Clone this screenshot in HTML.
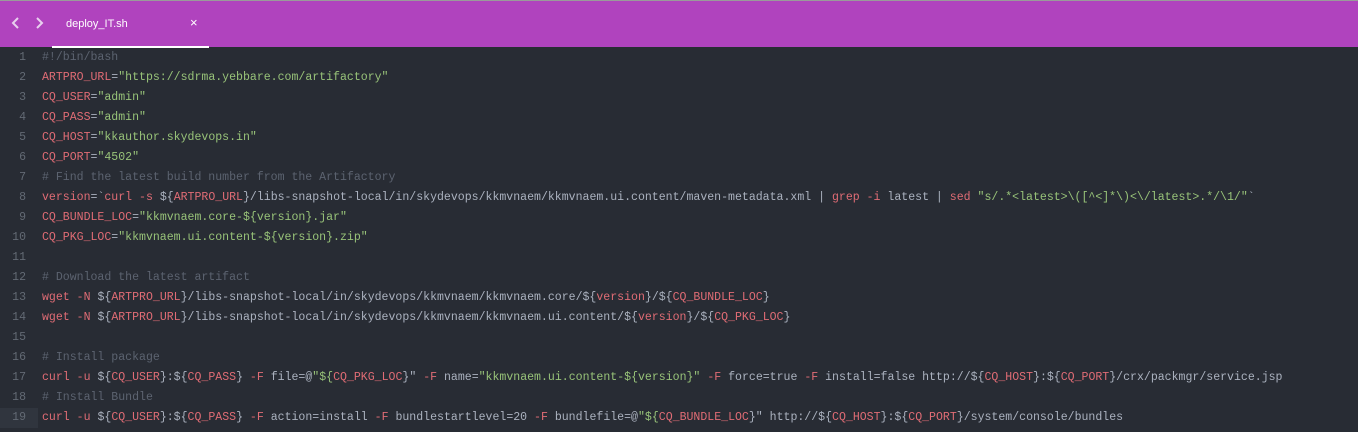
<!DOCTYPE html>
<html><head><style>
body{margin:0;width:1358px;height:432px;background:#282c34;overflow:hidden;font-family:"Liberation Sans",sans-serif}
.top{position:absolute;left:0;top:0;width:1358px;height:47px;background:#b043be;border-top:1px solid #9a9a9a;box-sizing:border-box}
.tab{position:absolute;left:66px;top:17px;color:#fff;font-size:11px}
.x{position:absolute;left:190px;top:14px;color:#fff;font-size:13px}
.ul{position:absolute;left:52px;top:45px;width:157px;height:2px;background:#fff}
.code{position:absolute;left:0;top:48px;font-family:"Liberation Mono",monospace;font-size:11.55px;color:#abb2bf}
.l{height:20px;line-height:20px;position:relative;white-space:pre}
.n{display:inline-block;width:26px;text-align:right;color:#636a74;margin-right:16px}
.r{color:#e06c75}.g{color:#98c379}.c{color:#5c6370}
.hl .n{background:#30353e;width:38px;margin-right:4px;box-sizing:border-box;padding-right:12px}
</style></head><body>
<div class="top">
<svg style="position:absolute;left:10px;top:15px" width="12" height="14"><path d="M8 2 L3 7 L8 12" stroke="#e8d0ee" stroke-width="2" fill="none"/></svg>
<svg style="position:absolute;left:33px;top:15px" width="12" height="14"><path d="M4 2 L9 7 L4 12" stroke="#e8d0ee" stroke-width="2" fill="none"/></svg>
<div class="tab">deploy_IT.sh</div><div class="x">×</div><div class="ul"></div>
</div>
<div class="code"><div class="l"><span class="n">1</span><span class="c">#!/bin/bash</span></div><div class="l"><span class="n">2</span><span class="r">ARTPRO_URL</span>=<span class="g">"https://sdrma.yebbare.com/artifactory"</span></div><div class="l"><span class="n">3</span><span class="r">CQ_USER</span>=<span class="g">"admin"</span></div><div class="l"><span class="n">4</span><span class="r">CQ_PASS</span>=<span class="g">"admin"</span></div><div class="l"><span class="n">5</span><span class="r">CQ_HOST</span>=<span class="g">"kkauthor.skydevops.in"</span></div><div class="l"><span class="n">6</span><span class="r">CQ_PORT</span>=<span class="g">"4502"</span></div><div class="l"><span class="n">7</span><span class="c"># Find the latest build number from the Artifactory</span></div><div class="l"><span class="n">8</span><span class="r">version</span>=`<span class="r">curl -s</span> ${<span class="r">ARTPRO_URL</span>}/libs-snapshot-local/in/skydevops/kkmvnaem/kkmvnaem.ui.content/maven-metadata.xml | <span class="r">grep -i</span> latest | <span class="r">sed</span> <span class="g">"s/.*&lt;latest&gt;\([^&lt;]*\)&lt;\/latest&gt;.*/\1/"</span>`</div><div class="l"><span class="n">9</span><span class="r">CQ_BUNDLE_LOC</span>=<span class="g">"kkmvnaem.core-${version}.jar"</span></div><div class="l"><span class="n">10</span><span class="r">CQ_PKG_LOC</span>=<span class="g">"kkmvnaem.ui.content-${version}.zip"</span></div><div class="l"><span class="n">11</span></div><div class="l"><span class="n">12</span><span class="c"># Download the latest artifact</span></div><div class="l"><span class="n">13</span><span class="r">wget -N</span> ${<span class="r">ARTPRO_URL</span>}/libs-snapshot-local/in/skydevops/kkmvnaem/kkmvnaem.core/${<span class="r">version</span>}/${<span class="r">CQ_BUNDLE_LOC</span>}</div><div class="l"><span class="n">14</span><span class="r">wget -N</span> ${<span class="r">ARTPRO_URL</span>}/libs-snapshot-local/in/skydevops/kkmvnaem/kkmvnaem.ui.content/${<span class="r">version</span>}/${<span class="r">CQ_PKG_LOC</span>}</div><div class="l"><span class="n">15</span></div><div class="l"><span class="n">16</span><span class="c"># Install package</span></div><div class="l"><span class="n">17</span><span class="r">curl -u</span> ${<span class="r">CQ_USER</span>}:${<span class="r">CQ_PASS</span>} <span class="r">-F</span> file=@<span class="g">"${</span><span class="r">CQ_PKG_LOC</span>}" <span class="r">-F</span> name=<span class="g">"kkmvnaem.ui.content-${version}"</span> <span class="r">-F</span> force=true <span class="r">-F</span> install=false http://${<span class="r">CQ_HOST</span>}:${<span class="r">CQ_PORT</span>}/crx/packmgr/service.jsp</div><div class="l"><span class="n">18</span><span class="c"># Install Bundle</span></div><div class="l hl"><span class="n">19</span><span class="r">curl -u</span> ${<span class="r">CQ_USER</span>}:${<span class="r">CQ_PASS</span>} <span class="r">-F</span> action=install <span class="r">-F</span> bundlestartlevel=20 <span class="r">-F</span> bundlefile=@<span class="g">"${</span><span class="r">CQ_BUNDLE_LOC</span>}" http://${<span class="r">CQ_HOST</span>}:${<span class="r">CQ_PORT</span>}/system/console/bundles</div></div>
</body></html>
